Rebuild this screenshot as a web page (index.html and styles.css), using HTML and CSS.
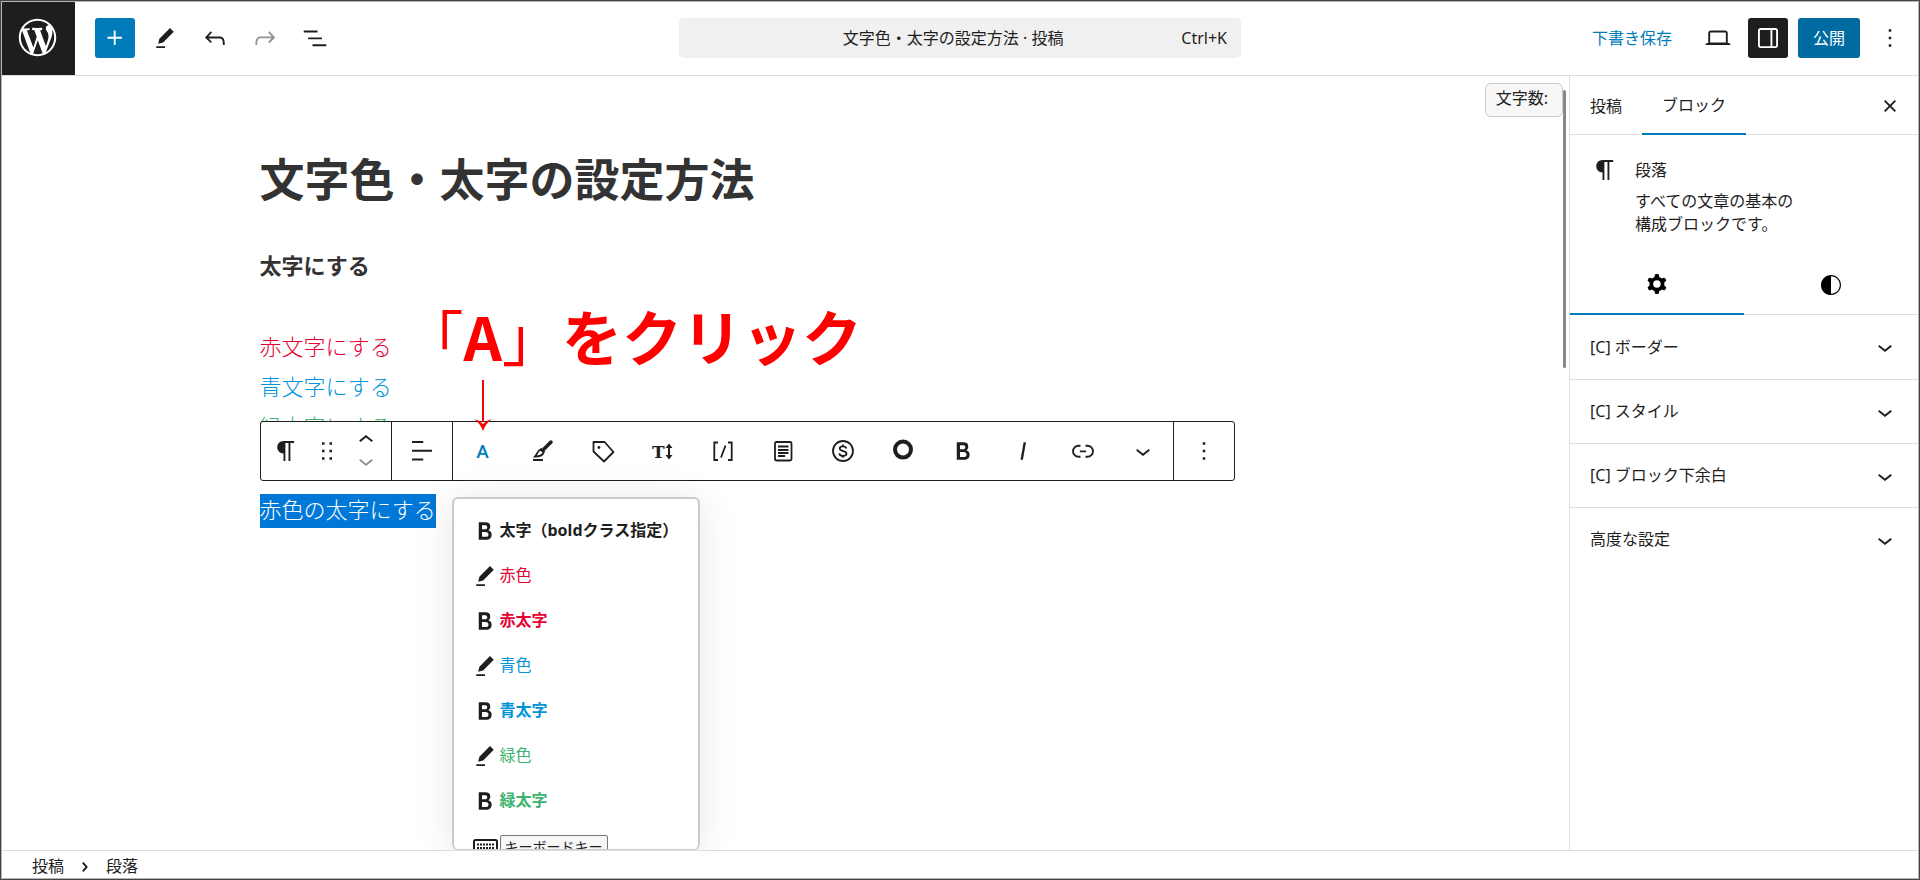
FILE: index.html
```html
<!DOCTYPE html>
<html lang="ja">
<head>
<meta charset="utf-8">
<title>文字色・太字の設定方法</title>
<link rel="stylesheet" href="styles.css">
</head>
<body>
<svg class="sprite" aria-hidden="true">
  <symbol id="bold" viewBox="0 0 24 24"><path d="M14.7 11.3c1-.6 1.5-1.6 1.5-3 0-2.3-1.3-3.4-4-3.4H7v14h5.8c1.4 0 2.5-.3 3.3-1 .8-.7 1.2-1.7 1.2-2.9.1-1.9-.8-3.1-2.6-3.7zm-5.1-4h2.3c.6 0 1.1.1 1.4.4.3.3.5.7.5 1.2s-.2 1-.5 1.2c-.3.3-.8.4-1.4.4H9.6V7.3zm4.6 9c-.4.3-1 .4-1.7.4H9.6v-3.9h2.9c.7 0 1.3.2 1.7.5.4.3.6.8.6 1.5s-.2 1.2-.6 1.5z"/></symbol>
  <symbol id="pencil" viewBox="0 0 24 24"><path d="m19 7-3-3-8.5 8.5-1 4 4-1L19 7Zm-7 11.5H5V20h7v-1.5Z"/></symbol>
  <symbol id="down" viewBox="0 0 24 24"><path d="M17.5 11.6L12 16l-5.5-4.4.9-1.2L12 14l4.5-3.6 1 1.2z"/></symbol>
  <symbol id="up" viewBox="0 0 24 24"><path d="M6.5 12.4L12 8l5.5 4.4-.9 1.2L12 10l-4.5 3.6-1-1.2z"/></symbol>
  <symbol id="more" viewBox="0 0 24 24"><path d="M13 19h-2v-2h2v2zm0-6h-2v-2h2v2zm0-6h-2V5h2v2z"/></symbol>
  <symbol id="para" viewBox="0 0 24 24"><path d="m10 14v6h1.500v-14.500h2.500v14.500h1.500v-14.500h3v-1.500h-8.500c-2.760 0-5 2.240-5 5s2.240 5 5 5z"/></symbol>
</svg>
<div class="app">
  <header class="header">
    <div class="header-start">
      <a class="logo" href="#" aria-label="投稿一覧"><svg viewBox="-2 -2 24 24"><path d="M20 10c0-5.51-4.490-10-10-10C4.480 0 0 4.490 0 10c0 5.520 4.480 10 10 10 5.510 0 10-4.480 10-10zM7.780 15.370L4.370 6.220c.55-.02 1.170-.08 1.170-.08.5-.06.44-1.130-.06-1.110 0 0-1.450.11-2.370.11-.18 0-.37 0-.58-.01C4.120 2.690 6.870 1.110 10 1.110c2.330 0 4.450.87 6.050 2.340-.68-.11-1.650.39-1.650 1.580 0 .74.45 1.360.9 2.100.35.61.55 1.360.55 2.460 0 1.490-1.400 5-1.400 5l-3.030-8.370c.54-.02.82-.17.82-.17.5-.05.44-1.250-.06-1.220 0 0-1.440.12-2.380.12-.87 0-2.330-.12-2.330-.12-.5-.03-.56 1.200-.06 1.220l.92.08 1.260 3.410zM17.410 10c.24-.64.74-1.870.43-4.250.7 1.290 1.050 2.710 1.050 4.250 0 3.290-1.730 6.240-4.400 7.780.97-2.590 1.940-5.200 2.920-7.780zM6.100 18.090C3.120 16.650 1.110 13.530 1.110 10c0-1.300.23-2.480.72-3.590C3.250 10.300 4.670 14.200 6.100 18.090zm4.030-6.630l2.580 6.980c-.86.29-1.760.45-2.710.45-.79 0-1.570-.11-2.290-.33.81-2.380 1.620-4.740 2.420-7.100z"/></svg></a>
      <button class="tool add" aria-label="ブロック挿入"><svg class="icon" viewBox="0 0 24 24"><path d="M11 12.500V17.500H12.500V12.500H17.500V11H12.500V6H11V11H6V12.500H11Z"/></svg></button>
      <button class="tool" aria-label="ツール"><svg class="icon"><use href="#pencil"/></svg></button>
      <button class="tool" aria-label="元に戻す"><svg class="icon" viewBox="0 0 24 24"><path d="M18.300 11.700c-.6-.6-1.400-.9-2.300-.9H6.700l2.900-3.300-1.100-1-4.500 5L8.500 16l1-1-2.700-2.700H16c.5 0 .9.2 1.300.5 1 1 1 3.400 1 4.500v.3h1.500v-.2c0-1.500 0-4.300-1.500-5.700z"/></svg></button>
      <button class="tool" disabled aria-label="やり直す"><svg class="icon" viewBox="0 0 24 24"><path d="M15.600 6.500l-1.100 1 2.900 3.300H8c-.9 0-1.700.3-2.300.9-1.400 1.500-1.400 4.200-1.400 5.600v.2h1.500v-.3c0-1.100 0-3.500 1-4.500.3-.3.7-.5 1.300-.5h9.200L14.500 15l1.100 1.100 4.600-4.600-4.600-5z"/></svg></button>
      <button class="tool" aria-label="ドキュメント概観"><svg class="icon" viewBox="0 0 24 24"><path d="M3 6h11v1.500H3V6Zm3.500 5.500h11V13h-11v-1.500ZM21 17H10v1.500h11V17Z"/></svg></button>
    </div>
    <button class="command"><span class="command-title">文字色・太字の設定方法 · 投稿</span><span>Ctrl+K</span></button>
    <div class="header-end">
      <button class="save">下書き保存</button>
      <button class="tool preview" aria-label="表示"><svg class="icon" viewBox="0 0 24 24"><path d="M20.500 16h-.7V8c0-1.100-.9-2-2-2H6.200c-1.100 0-2 .9-2 2v8h-.7c-.8 0-1.500.7-1.500 1.500h20c0-.8-.7-1.500-1.500-1.500zM5.700 8c0-.3.2-.5.5-.5h11.600c.3 0 .5.2.5.5v7.600H5.700V8z"/></svg></button>
      <button class="tool dark" aria-label="設定"><svg class="icon" viewBox="0 0 24 24"><path fill-rule="evenodd" d="M18 4H6c-1.100 0-2 .9-2 2v12c0 1.100.9 2 2 2h12c1.100 0 2-.9 2-2V6c0-1.100-.9-2-2-2zm-4 14.500H6c-.3 0-.5-.2-.5-.5V6c0-.3.2-.5.5-.5h8v13zm4.500-.5c0 .3-.2.5-.5.5h-2.500v-13H18c.3 0 .5.2.5.5v12z"/></svg></button>
      <button class="publish">公開</button>
      <button class="tool" aria-label="オプション"><svg class="icon"><use href="#more"/></svg></button>
    </div>
  </header>

  <div class="body">
    <main class="canvas">
      <div class="content">
        <h1>文字色・太字の設定方法</h1>
        <h3>太字にする</h3>
        <p class="red">赤文字にする</p>
        <p class="blue">青文字にする</p>
        <p class="green">緑文字にする</p>
        <div class="selected">
          <p><mark>赤色の太字にする</mark></p>
          <div class="toolbar" role="toolbar" aria-label="ブロックツール">
            <div class="group">
              <button class="wide" aria-label="段落"><svg class="icon"><use href="#para"/></svg></button>
              <button class="drag" aria-label="ドラッグ"><svg class="icon" viewBox="0 0 24 24"><path d="M8 7h2V5H8v2zm0 6h2v-2H8v2zm0 6h2v-2H8v2zm6-14v2h2V5h-2zm0 8h2v-2h-2v2zm0 6h2v-2h-2v2z"/></svg></button>
              <div class="movers">
                <button aria-label="上に移動"><svg class="icon"><use href="#up"/></svg></button>
                <button disabled aria-label="下に移動"><svg class="icon"><use href="#down"/></svg></button>
              </div>
            </div>
            <div class="group">
              <button aria-label="配置"><svg class="icon" viewBox="0 0 24 24"><path d="M13 5.500H4V4h9v1.500Zm7 7H4V11h16v1.500Zm-7 7H4V18h9v1.500Z"/></svg></button>
            </div>
            <div class="group">
              <button class="letter">A</button>
              <button aria-label="マーカー"><svg class="icon line" viewBox="0 0 30 30"><path d="M5 24h10" stroke-width="2"/><path d="M23 6l-7 7" stroke-width="3.500" stroke-linecap="round"/><path d="M12.500 13.500c-3 1-3.500 5-5.500 7 4 0 8-1 8.500-4.500z"/><path d="M12.500 12.500l4 4" stroke-width="2"/></svg></button>
              <button aria-label="バッジ"><svg class="icon line" viewBox="0 0 30 30"><path d="M5.500 6h11l9 10-9.500 9.500-10.500-10z" stroke-linejoin="round"/><circle cx="11" cy="11.500" r="1.400" fill="currentColor" stroke="none"/></svg></button>
              <button aria-label="文字サイズ"><svg class="icon" viewBox="0 0 30 30"><text x="4" y="22" class="t">T</text><path d="M21 7.500l3.500 4.500h-2.500v7h2.500L21 23.500l-3.500-4.500h2.500v-7h-2.500z"/></svg></button>
              <button aria-label="ショートコード"><svg class="icon line" viewBox="0 0 30 30"><path d="M10 6.500H6.300v17.500H10M20 6.500h3.700v17.500H20M17.500 9.500l-4.500 12"/></svg></button>
              <button aria-label="テンプレート"><svg class="icon line" viewBox="0 0 30 30"><rect x="7" y="6" width="16.500" height="18.500" rx="1.500"/><path d="M10 10.500h10.500M10 14h10.500M10 17h10.500M10 20h7"/></svg></button>
              <button aria-label="アフィリエイト"><svg class="icon line" viewBox="0 0 30 30"><circle cx="15" cy="15" r="10"/><path d="M18.300 12.500c-.3-1.500-1.500-2.200-3.300-2.200s-3.300.8-3.300 2.300c0 3.300 6.800 1.500 6.800 4.900 0 1.600-1.500 2.400-3.500 2.400s-3.500-.8-3.700-2.600M15 8.500v2M15 19.500v2.200"/></svg></button>
              <button aria-label="ランキング"><svg class="icon" viewBox="0 0 30 30"><circle cx="15" cy="13.600" r="8" fill="none" stroke="currentColor" stroke-width="4"/></svg></button>
              <button aria-label="太字"><svg class="icon"><use href="#bold"/></svg></button>
              <button aria-label="イタリック"><svg class="icon" viewBox="0 0 24 24"><path d="M12.500 5L10 19h1.900l2.500-14z"/></svg></button>
              <button aria-label="リンク"><svg class="icon" viewBox="0 0 24 24"><path d="M10 17.389H8.444A5.194 5.194 0 1 1 8.444 7H10v1.500H8.444a3.694 3.694 0 0 0 0 7.389H10v1.500ZM14 7h1.556a5.194 5.194 0 0 1 0 10.390H14v-1.500h1.556a3.694 3.694 0 0 0 0-7.390H14V7Zm-4.500 6h5v-1.500h-5V13Z"/></svg></button>
              <button aria-label="さらに表示"><svg class="icon"><use href="#down"/></svg></button>
            </div>
            <div class="group">
              <button aria-label="オプション"><svg class="icon"><use href="#more"/></svg></button>
            </div>
          </div>
        </div>
        <div class="popover" role="menu">
          <button role="menuitem"><svg class="icon"><use href="#bold"/></svg><b>太字（boldクラス指定）</b></button>
          <button role="menuitem"><svg class="icon"><use href="#pencil"/></svg><span class="red">赤色</span></button>
          <button role="menuitem"><svg class="icon"><use href="#bold"/></svg><b class="red">赤太字</b></button>
          <button role="menuitem"><svg class="icon"><use href="#pencil"/></svg><span class="blue">青色</span></button>
          <button role="menuitem"><svg class="icon"><use href="#bold"/></svg><b class="blue">青太字</b></button>
          <button role="menuitem"><svg class="icon"><use href="#pencil"/></svg><span class="green">緑色</span></button>
          <button role="menuitem"><svg class="icon"><use href="#bold"/></svg><b class="green">緑太字</b></button>
          <button role="menuitem"><svg class="icon line" viewBox="0 0 30 30"><rect x="4" y="9" width="23" height="16" rx="1.500" stroke-width="2"/><path d="M7 13.500h17M7 17h17" stroke-dasharray="2 1"/><path d="M10 21h11"/></svg><kbd>キーボードキー</kbd></button>
        </div>
        <div class="note"><span>「</span>A<span>」</span>をクリック</div>
        <svg class="arrow" viewBox="0 0 20 52"><path d="M10 0v42" stroke="#f00" stroke-width="2"/><path d="M1 39q5 1 9 5q4-4 9-5q-6 4-9 12q-3-8-9-12z" fill="#f00"/></svg>
      </div>
      <div class="count">文字数:</div>
      <div class="scrollbar"></div>
    </main>

    <aside class="sidebar">
      <div class="tabs" role="tablist">
        <button role="tab">投稿</button>
        <button role="tab" class="active" aria-selected="true">ブロック</button>
        <button class="close" aria-label="設定を閉じる"><svg class="icon" viewBox="0 0 24 24"><path d="M12 13.060l3.712 3.713 1.061-1.060L13.061 12l3.712-3.712-1.060-1.060L12 10.938 8.288 7.227l-1.061 1.060L10.939 12l-3.712 3.712 1.060 1.061L12 13.061z"/></svg></button>
      </div>
      <div class="card">
        <svg class="icon"><use href="#para"/></svg>
        <div><h2>段落</h2><p>すべての文章の基本の<br>構成ブロックです。</p></div>
      </div>
      <div class="subtabs" role="tablist">
        <button role="tab" class="active" aria-selected="true" aria-label="設定"><svg class="icon" viewBox="0 0 24 24"><path fill-rule="evenodd" d="M10.289 4.836A1 1 0 0111.275 4h1.306a1 1 0 01.987.836l.244 1.466c.787.26 1.503.679 2.108 1.218l1.393-.522a1 1 0 011.216.437l.653 1.130a1 1 0 01-.23 1.273l-1.148.944a6.025 6.025 0 010 2.435l1.149.946a1 1 0 01.23 1.272l-.653 1.130a1 1 0 01-1.216.437l-1.394-.522c-.605.54-1.320.958-2.108 1.218l-.244 1.466a1 1 0 01-.987.836h-1.306a1 1 0 01-.986-.836l-.244-1.466a5.995 5.995 0 01-2.108-1.218l-1.394.522a1 1 0 01-1.217-.436l-.653-1.131a1 1 0 01.23-1.272l1.149-.946a6.026 6.026 0 010-2.435l-1.148-.944a1 1 0 01-.23-1.272l.653-1.131a1 1 0 011.217-.437l1.393.522a5.994 5.994 0 012.108-1.218l.244-1.466zM14.929 12a3 3 0 11-6 0 3 3 0 016 0z"/></svg></button>
        <button role="tab" aria-label="スタイル"><svg class="icon" viewBox="0 0 24 24"><path d="M12 4c-4.400 0-8 3.600-8 8v.1c0 4.100 3.200 7.500 7.200 7.900h.8c4.400 0 8-3.600 8-8s-3.600-8-8-8zm0 15V5c3.900 0 7 3.100 7 7s-3.100 7-7 7z"/></svg></button>
      </div>
      <button class="panel"><span>[C] ボーダー</span><svg class="icon"><use href="#down"/></svg></button>
      <button class="panel"><span>[C] スタイル</span><svg class="icon"><use href="#down"/></svg></button>
      <button class="panel"><span>[C] ブロック下余白</span><svg class="icon"><use href="#down"/></svg></button>
      <button class="panel"><span>高度な設定</span><svg class="icon"><use href="#down"/></svg></button>
    </aside>
  </div>

  <footer class="footer">
    <a href="#">投稿</a>
    <svg class="icon" viewBox="0 0 24 24"><path d="M10.862 8.041L14.281 12.029L10.862 16.017L9.723 15.041L12.305 12.029L9.723 9.017L10.862 8.041Z"/></svg>
    <a href="#">段落</a>
  </footer>
</div>
</body>
</html>
```
FILE: styles.css
```css
* { box-sizing: border-box; }
body {
  margin: 0;
  color: #1e1e1e;
  font: 16px/23px "Noto Sans", "Noto Sans CJK JP", sans-serif;
}
button {
  display: flex;
  align-items: center;
  justify-content: center;
  flex: none;
  margin: 0;
  padding: 0;
  border: 0;
  background: none;
  color: inherit;
  font: inherit;
}
a { color: inherit; text-decoration: none; }
b { font-weight: bold; }
h1, h2, h3, p { margin: 0; }
.sprite { position: absolute; width: 0; height: 0; }
.icon { display: block; flex: none; width: 30px; height: 30px; fill: currentColor; }
.line { fill: none; stroke: currentColor; stroke-width: 1.8; }
.red { color: #e60033; }
.blue { color: #0095d9; }
.green { color: #3eb370; }

.app {
  display: flex;
  flex-direction: column;
  height: 100vh;
  border: 1px solid #444;
  box-shadow: inset 0 0 0 1px #b5b5b5;
  padding: 1px;
}

.header {
  display: grid;
  grid-template-columns: 1fr minmax(0, 562px) 1fr;
  align-items: center;
  flex: none;
  height: 74px;
  border-bottom: 1px solid #ddd;
}
.header-start, .header-end { display: flex; align-items: center; gap: 10px; }
.header-end { justify-content: flex-end; padding-right: 8px; }
.logo {
  display: flex;
  align-items: center;
  justify-content: center;
  width: 73px;
  height: 73px;
  margin-right: 10px;
  padding: 0 2px 2px 0;
  background: #1e1e1e;
}
.logo svg { width: 45px; height: 45px; fill: #fff; }
.tool { width: 40px; height: 40px; border-radius: 3px; }
.tool, .publish, .command, .save { margin-bottom: 1px; }
.tool:disabled { color: #949494; }
.add { background: #007cba; color: #fff; }
.dark { background: #1e1e1e; color: #fff; }
.command {
  height: 40px;
  padding: 0 14px;
  border-radius: 5px;
  background: #f0f0f0;
}
.command-title { flex: 1; padding-left: 32px; text-align: center; }
.save { padding: 0 16px; color: #007cba; }
.publish {
  height: 40px;
  padding: 0 15px;
  border-radius: 3px;
  background: #006ba1;
  color: #fff;
}

.body { display: flex; flex: 1; min-height: 0; }
.canvas { position: relative; flex: 1; min-width: 0; overflow: hidden; }
.content {
  position: relative;
  max-width: 1052px;
  height: 100%;
  margin: 0 auto;
  padding-top: 74px;
  color: #333;
}
h1 { margin-bottom: 35px; font-size: 45px; line-height: 60px; }
h3 { margin-bottom: 41px; font-size: 22px; line-height: 40px; }
.content p { font-size: 22px; font-weight: 300; line-height: 40px; }
.selected { position: relative; margin-top: 43px; }
mark { padding-bottom: 4px; background: #0078d7; color: #fff; }

.toolbar {
  position: absolute;
  bottom: calc(100% + 8px);
  left: 0;
  display: flex;
  height: 60px;
  border: 1px solid #1e1e1e;
  border-radius: 3px;
  background: #fff;
  color: #1e1e1e;
}
.group { display: flex; }
.group + .group { border-left: 1px solid #1e1e1e; }
.group button { width: 60px; height: 58px; }
.group .wide { width: 50px; }
.group .drag { width: 32px; }
.movers { width: 48px; padding: 7px 2px 0 0; }
.group .movers button { width: 46px; height: 21px; }
.movers button:disabled { color: #949494; }
.group .letter { color: #007cba; font: 500 19px Roboto, sans-serif; }
.t { font: bold 17px "DejaVu Serif", serif; }

.popover {
  position: absolute;
  top: 421px;
  bottom: 0;
  left: 192px;
  width: 248px;
  padding-top: 9px;
  overflow: hidden;
  border: 2px solid #ccc;
  border-bottom-width: 1px;
  border-radius: 6px;
  background: #fff;
  box-shadow: 0 4px 40px rgba(0, 0, 0, .1);
  color: #1e1e1e;
}
.popover button {
  justify-content: flex-start;
  width: 100%;
  height: 45px;
  padding-left: 16px;
  white-space: nowrap;
}
kbd {
  padding: 0 4px;
  border: 1px solid #777;
  border-radius: 2px;
  background: #f7f7f7;
  font: 14px/20px "Noto Sans CJK JP", sans-serif;
}

.note {
  position: absolute;
  top: 214px;
  left: 144px;
  color: #f00;
  font: bold 60px/90px "Noto Sans CJK JP", sans-serif;
  white-space: nowrap;
}
.note span { font-weight: normal; }
.arrow { position: absolute; top: 304px; left: 213px; width: 20px; height: 52px; }

.count {
  position: absolute;
  top: 7px;
  right: 6px;
  padding: 3px 14px 6px 10px;
  border: 1px solid #ccc;
  border-radius: 6px;
  background: #f7f7f7;
}
.scrollbar {
  position: absolute;
  top: 14px;
  right: 3px;
  width: 3px;
  height: 278px;
  border-radius: 2px;
  background: #888;
}

.sidebar { flex: none; width: 349px; border-left: 1px solid #ddd; }
.tabs { display: flex; height: 59px; border-bottom: 1px solid #ddd; }
.tabs button { height: 59px; padding: 2px 20px 0; }
.tabs .active, .subtabs .active { border-bottom: 2px solid #007cba; }
.tabs .close { margin-left: auto; padding: 0 13px; }
.card { display: flex; gap: 15px; padding: 24px 20px 0; min-height: 119px; }
.card .icon { margin-top: -4px; }
h2 { margin-bottom: 8px; font-size: 16px; font-weight: inherit; }
.subtabs { display: flex; height: 61px; border-bottom: 1px solid #ddd; color: #000; }
.subtabs button { flex: 1; height: 61px; }
.panel {
  justify-content: space-between;
  width: 100%;
  height: 64px;
  padding: 0 18px 0 20px;
}
.panel + .panel { border-top: 1px solid #ddd; }

.footer {
  display: flex;
  align-items: center;
  gap: 6px;
  flex: none;
  height: 28px;
  padding: 4px 30px 0;
  border-top: 1px solid #ddd;
}
```
